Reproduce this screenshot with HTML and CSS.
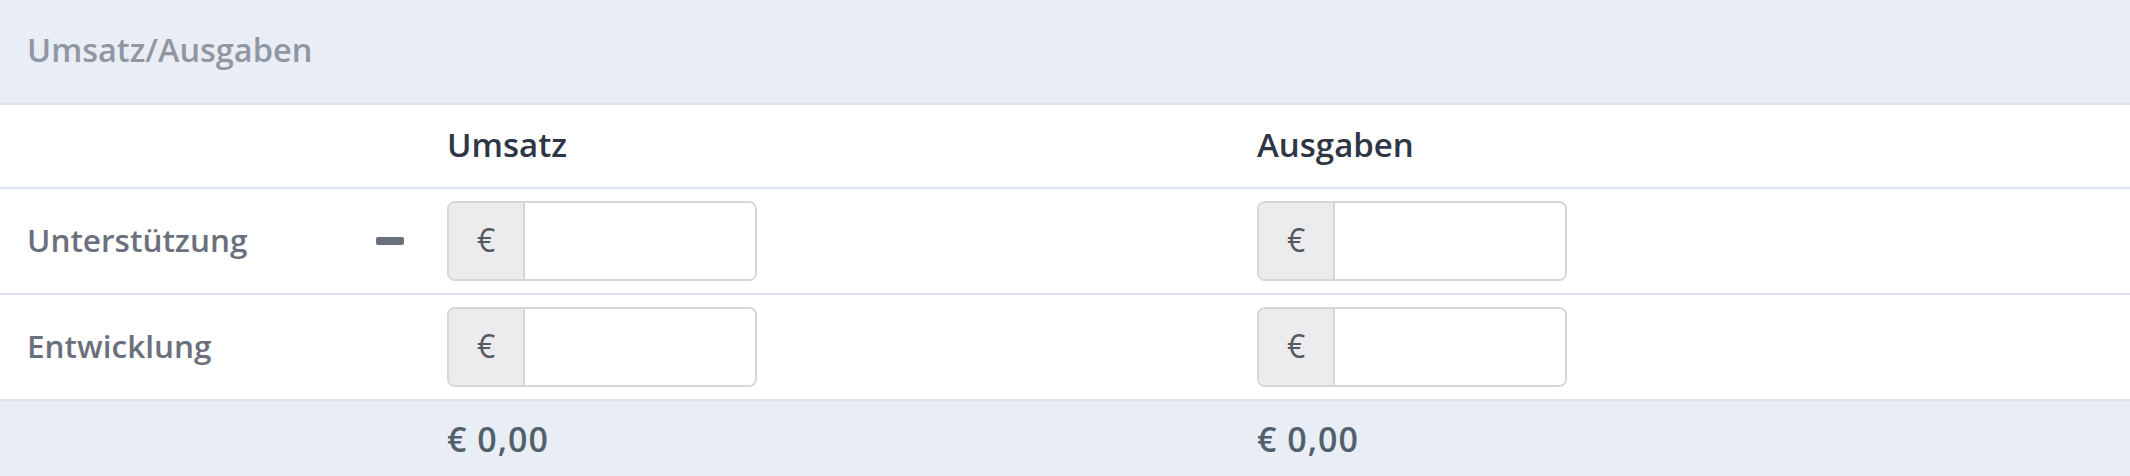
FILE: index.html
```html
<!DOCTYPE html>
<html lang="de">
<head>
  <meta charset="UTF-8">
  <title>Umsatz/Ausgaben</title>
  <link rel="stylesheet" href="styles.css">
</head>
<body>
  <div class="panel">
    <div class="panel-title">Umsatz/Ausgaben</div>

    <div class="row head">
      <div class="cell"></div>
      <div class="cell">Umsatz</div>
      <div class="cell">Ausgaben</div>
    </div>

    <div class="row">
      <div class="cell label">
        <span>Unterstützung</span>
        <span class="minus"></span>
      </div>
      <div class="cell">
        <div class="money-input"><span class="prefix">€</span><input type="text"></div>
      </div>
      <div class="cell">
        <div class="money-input"><span class="prefix">€</span><input type="text"></div>
      </div>
    </div>

    <div class="row">
      <div class="cell label">
        <span>Entwicklung</span>
      </div>
      <div class="cell">
        <div class="money-input"><span class="prefix">€</span><input type="text"></div>
      </div>
      <div class="cell">
        <div class="money-input"><span class="prefix">€</span><input type="text"></div>
      </div>
    </div>

    <div class="row total">
      <div class="cell"></div>
      <div class="cell">€ 0,00</div>
      <div class="cell">€ 0,00</div>
    </div>
  </div>
</body>
</html>
```

FILE: styles.css
```css
body {
  margin: 0;
  font-family: "Open Sans", Lato, sans-serif;
  background-color: #fff;
}
.panel-title {
  height: 105px;
  box-sizing: border-box;
  padding: 0 0 5px 27px;
  display: flex;
  align-items: center;
  background-color: #e9edf6;
  border-bottom: 2px solid #dce3ef;
  color: #9097a2;
  font-size: 32.5px;
  font-weight: 600;
}
.row {
  display: grid;
  grid-template-columns: 447px 810px 1fr;
  height: 104px;
  border-bottom: 2px solid #dce3ef;
}
.cell {
  display: flex;
  align-items: center;
}
.head {
  height: 82px;
  color: #2e3646;
  font-size: 33px;
  font-weight: 600;
}
.head .cell,
.total .cell {
  padding-bottom: 4px;
}
.label {
  justify-content: space-between;
  padding: 0 43px 4px 27px;
  color: #6b717c;
  font-size: 31.5px;
  font-weight: 600;
}
.minus {
  width: 28px;
  height: 8px;
  margin-top: 4px;
  border-radius: 2px;
  background-color: #6b717c;
}
.money-input {
  display: flex;
  width: 310px;
  height: 80px;
  box-sizing: border-box;
  border: 2px solid #d6d6d6;
  border-radius: 8px;
  overflow: hidden;
}
.prefix {
  width: 78px;
  padding-bottom: 3px;
  box-sizing: border-box;
  display: flex;
  align-items: center;
  justify-content: center;
  background-color: #ececee;
  border-right: 2px solid #d6d6d6;
  color: #555a60;
  font-size: 32px;
}
.money-input input {
  flex-grow: 1;
  min-width: 0;
  border: none;
  outline: none;
  padding: 0 16px;
  font: inherit;
}
.total {
  height: 80px;
  border-bottom: none;
  background-color: #e9edf6;
  color: #52606b;
  font-size: 34px;
  font-weight: 600;
  letter-spacing: 1px;
}
```
